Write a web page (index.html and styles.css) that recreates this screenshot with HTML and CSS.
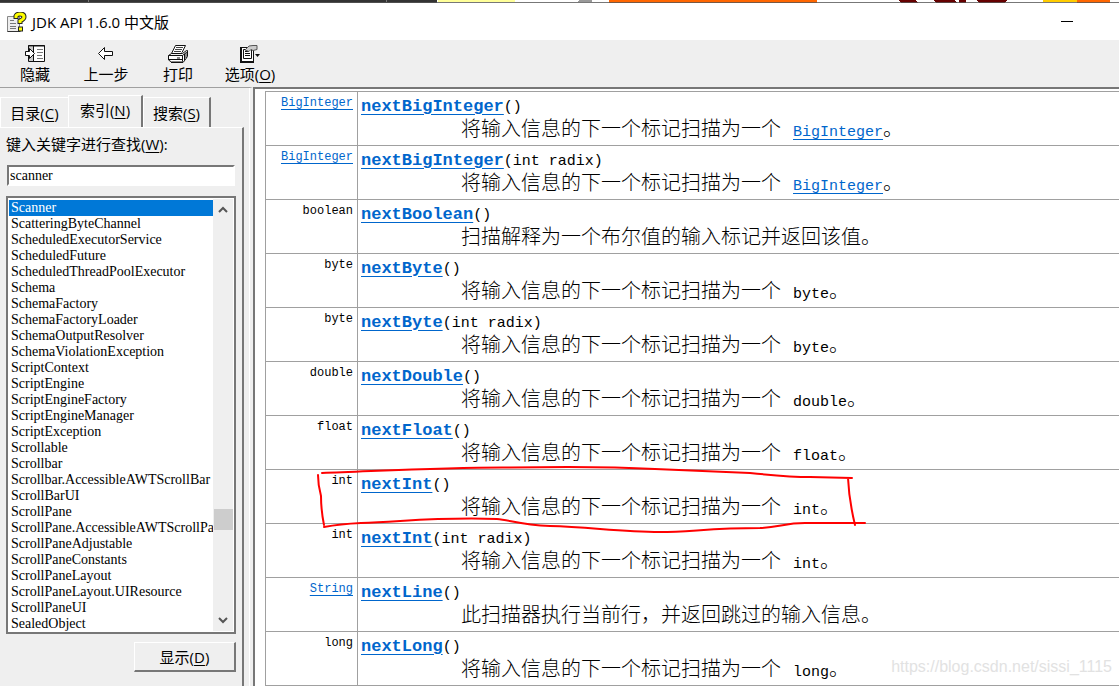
FILE: index.html
```html
<!DOCTYPE html>
<html lang="zh-CN">
<head>
<meta charset="utf-8">
<title>JDK API 1.6.0 中文版</title>
<link rel="stylesheet" href="styles.css">
</head>
<body>
<div class="backdrop"><svg width="1119" height="3" viewBox="0 0 1119 3" shape-rendering="crispEdges" aria-hidden="true"><path fill="#333" d="M0 0h437v3H0z"/><path fill="#777" d="M88 0h1v2h-1zM386 0h1v2h-1z"/><path fill="#ffff99" d="M438 0h77v2h-77z"/><path fill="#999" d="M579 0h13v2h-15z"/><path fill="#f60" d="M609 0h208v3H609zM1077 0h33v3h-33z"/><path fill="#600" d="M899 0h16l3 3h-17zM934 0h20l3 3h-21zM959 0h7v3h-7zM977 0h30l-2 3h-26z"/><path fill="#fc0" d="M1043 0h34v2h-34z"/><path fill="#555" fill-opacity=".8" d="M0 2h1119v1H0z"/></svg></div>
<header class="titlebar">
<svg class="app-icon" width="20" height="20" viewBox="0 0 20 20" aria-hidden="true"><path fill="#eee" stroke="#888" d="M.5 4.500h12v15H.5z"/><path fill="none" stroke="#333" d="M.5 19.500h13"/><path stroke="#777" d="M3 8.500h4M3 11.500h6M3 14.500h6M3 16.500h6"/><path fill="none" stroke="#222" stroke-width="5" d="M9 7V4q1-2 4-2 4 0 4 3 0 2-4 4v3M11 17h5"/><path fill="none" stroke="#ff0" stroke-width="3" d="M9 6V4q1-2 4-2 4 0 4 3 0 2-4 4v2M12 17h3"/></svg>
<h1 class="title">JDK API 1.6.0 中文版</h1>
<button class="minimize" type="button" aria-label="最小化"></button>
</header>
<nav class="toolbar">
<button type="button" class="tool"><svg width="20" height="20" viewBox="0 0 20 20" aria-hidden="true"><path fill="#fff" stroke="#111" d="M3.500 1.500h16v16h-16z"/><path fill="#ccc" d="M4 3h4v14H4z"/><path stroke="#111" d="M3 2h17M8.500 2v16"/><path stroke="#777" d="M12 5.500h6M12 8.500h6M12 11.500h5M12 14.500h6"/><path fill="#fff" stroke="#111" d="M.5 7.500h4v-3l5 5-5 5v-3h-4z"/></svg><span>隐藏</span></button>
<button type="button" class="tool"><svg width="20" height="20" viewBox="0 0 20 20" aria-hidden="true"><path fill="#fff" stroke="#111" d="M2.500 9.500l6-6v4h8v4h-8v4z"/></svg><span>上一步</span></button>
<button type="button" class="tool"><svg width="20" height="20" viewBox="0 0 20 20" aria-hidden="true"><path fill="#fff" stroke="#111" d="M7.500 1.500h10l-4 8h-10z"/><path stroke="#444" d="M8 3.500h7M7 5.500h7M6 7.500h7"/><path fill="#fff" stroke="#111" d="M.5 11.500l3-2h11l4-3h1v6l-4 5.500h-12l-3-2zM.5 11.500h14l5-4M14.500 11.500v6M16.500 10v6M18 9v5"/><path stroke="#111" d="M1 15.500h13M3 18.500h12"/><path stroke="#888" stroke-width="2" d="M9 14h3"/></svg><span>打印</span></button>
<button type="button" class="tool"><svg width="20" height="20" viewBox="0 0 20 20" aria-hidden="true"><path fill="#fff" stroke="#111" d="M.5 3.500h13v14H.5z"/><path fill="none" stroke="#111" stroke-width="2" d="M1 3v15h13"/><path fill="none" stroke="#111" d="M3.500 5.500h8v9h-8zM5 7.500h4M5 9.500h5M5 11.500h5"/><path fill="#ccc" stroke="#555" d="M5 6l4-4 4-.5h4v4l-4 1-2-1-2 2z"/><path fill="#111" d="M15 10h5l-2.500 3z"/></svg><span>选项(<u>O</u>)</span></button>
</nav>
<main class="workspace">
<aside class="sidebar">
<div class="tabs" role="tablist"><button type="button" role="tab" class="tab">目录(<u>C</u>)</button><button type="button" role="tab" class="tab active" aria-selected="true">索引(<u>N</u>)</button><button type="button" role="tab" class="tab">搜索(<u>S</u>)</button></div>
<section class="panel">
<label for="keyword">键入关键字进行查找(<u>W</u>):</label>
<input id="keyword" class="keyword" type="text" value="scanner">
<div class="listbox">
<ul class="entries"><li class="selected">Scanner</li><li>ScatteringByteChannel</li><li>ScheduledExecutorService</li><li>ScheduledFuture</li><li>ScheduledThreadPoolExecutor</li><li>Schema</li><li>SchemaFactory</li><li>SchemaFactoryLoader</li><li>SchemaOutputResolver</li><li>SchemaViolationException</li><li>ScriptContext</li><li>ScriptEngine</li><li>ScriptEngineFactory</li><li>ScriptEngineManager</li><li>ScriptException</li><li>Scrollable</li><li>Scrollbar</li><li>Scrollbar.AccessibleAWTScrollBar</li><li>ScrollBarUI</li><li>ScrollPane</li><li>ScrollPane.AccessibleAWTScrollPane</li><li>ScrollPaneAdjustable</li><li>ScrollPaneConstants</li><li>ScrollPaneLayout</li><li>ScrollPaneLayout.UIResource</li><li>ScrollPaneUI</li><li>SealedObject</li></ul>
<div class="scrollbar"><svg width="12" height="8" viewBox="0 0 12 8" aria-hidden="true"><path fill="none" stroke="#555" stroke-width="2" d="M2 7l4-4 4 4"/></svg><div class="thumb"></div><svg width="12" height="8" viewBox="0 0 12 8" aria-hidden="true"><path fill="none" stroke="#555" stroke-width="2" d="M2 1l4 4 4-4"/></svg></div>
</div>
<button type="button" class="show">显示(<u>D</u>)</button>
</section>
</aside>
<article class="document">
<table class="methods">
<tr><td class="type"><a href="#">BigInteger</a></td><td><a class="name" href="#">nextBigInteger</a>()<p>将输入信息的下一个标记扫描为一个 <a href="#">BigInteger</a>。</p></td></tr>
<tr><td class="type"><a href="#">BigInteger</a></td><td><a class="name" href="#">nextBigInteger</a>(int radix)<p>将输入信息的下一个标记扫描为一个 <a href="#">BigInteger</a>。</p></td></tr>
<tr><td class="type">boolean</td><td><a class="name" href="#">nextBoolean</a>()<p>扫描解释为一个布尔值的输入标记并返回该值。</p></td></tr>
<tr><td class="type">byte</td><td><a class="name" href="#">nextByte</a>()<p>将输入信息的下一个标记扫描为一个 <code>byte</code>。</p></td></tr>
<tr><td class="type">byte</td><td><a class="name" href="#">nextByte</a>(int radix)<p>将输入信息的下一个标记扫描为一个 <code>byte</code>。</p></td></tr>
<tr><td class="type">double</td><td><a class="name" href="#">nextDouble</a>()<p>将输入信息的下一个标记扫描为一个 <code>double</code>。</p></td></tr>
<tr><td class="type">float</td><td><a class="name" href="#">nextFloat</a>()<p>将输入信息的下一个标记扫描为一个 <code>float</code>。</p></td></tr>
<tr><td class="type">int</td><td><a class="name" href="#">nextInt</a>()<p>将输入信息的下一个标记扫描为一个 <code>int</code>。</p></td></tr>
<tr><td class="type">int</td><td><a class="name" href="#">nextInt</a>(int radix)<p>将输入信息的下一个标记扫描为一个 <code>int</code>。</p></td></tr>
<tr><td class="type"><a href="#">String</a></td><td><a class="name" href="#">nextLine</a>()<p>此扫描器执行当前行，并返回跳过的输入信息。</p></td></tr>
<tr><td class="type">long</td><td><a class="name" href="#">nextLong</a>()<p>将输入信息的下一个标记扫描为一个 <code>long</code>。</p></td></tr>
</table>
<svg class="annotation" width="560" height="80" viewBox="310 460 560 80" aria-hidden="true"><path fill="none" stroke="#f00" stroke-width="2" stroke-linecap="round" stroke-linejoin="round" d="M322 473C380 471 450 467 510 467.500C590 466 620 467 655 469L750 473Q790 477 810 477L852 478M848 478Q849 500 855 525M865 523H805C785 523 780 527 760 528C710 528 690 532 660 532C620 532 590 527 550 526C520 525 510 520 497 519C440 517 410 521 361 523Q340 524 324 527M318 475Q318 485 321 496Q321 510 324 525"/></svg>
<span class="watermark">https://blog.csdn.net/sissi_1115</span>
</article>
</main>
</body>
</html>
```
FILE: styles.css
```css
* { box-sizing: border-box; }
body { margin: 0; height: 100vh; overflow: hidden; display: flex; flex-direction: column; background: #fff; color: #000; font: 15px/20px "Open Sans", "Noto Sans CJK SC", sans-serif; }
button { font: inherit; color: inherit; border: 0; padding: 0; background: transparent; }
u { text-underline-offset: 2px; }
svg { display: block; flex: none; }
a { color: #0066cc; text-underline-offset: 3px; }
.backdrop { flex: none; height: 3px; overflow: hidden; }
.titlebar { flex: none; height: 37px; display: flex; align-items: center; padding: 0 46px 0 7px; gap: 5px; }
.title { margin: 0; flex: 1; font-size: 15px; font-weight: 400; }
.minimize { width: 12px; height: 1px; background: #000; }
.toolbar { flex: none; height: 47px; display: flex; background: #efefef; padding: 4px 0 0; }
.tool { width: 72px; display: flex; flex-direction: column; align-items: center; white-space: nowrap; }
.tool:first-child { width: 70px; }
.workspace { flex: 1; min-height: 0; display: flex; }
.sidebar { flex: none; width: 253px; display: flex; flex-direction: column; border-top: 1px solid #a0a0a0; border-right: 3px solid #efefef; background: #efefef; padding-top: 8px; box-shadow: inset -1px 0 #fff; }
.tabs { flex: none; height: 31px; display: flex; align-items: flex-end; }
.tab { width: 68px; height: 30px; border: solid #fff; border-width: 1px 0 0 1px; }
.tab:last-child { border-right: 2px solid #777; }
.tab.active { width: 75px; height: 33px; margin-bottom: -1px; padding-bottom: 4px; border-right: 2px solid #777; background: #efefef; }
.panel { width: 244px; flex: 1; min-height: 0; border-top: 1px solid #fff; border-right: 2px solid #777; padding: 6px 6px 0; display: flex; flex-direction: column; }
.keyword { flex: none; width: 228px; height: 21px; margin-top: 11px; margin-left: 1px; border: 2px solid; border-color: #777 #fff #fff #777; padding: 1px 1px 0; font: 14px/16px "Liberation Serif", serif; border-radius: 0; outline: 0; }
.listbox { flex: none; height: 438px; margin-top: 10px; width: 230px; border: 2px solid #777; background: #fff; display: flex; padding: 1px; }
.entries { list-style: none; margin: 0; padding: 1px 0 0; flex: 1; min-width: 0; overflow: hidden; font: 14px/16px "Liberation Serif", serif; }
.entries li { padding-left: 2px; white-space: nowrap; }
.entries .selected { color: #fff; background: #0078d7; }
.scrollbar { width: 20px; background: #efefef; display: flex; flex-direction: column; align-items: center; padding: 6px 0; }
.thumb { width: 19px; height: 21px; background: #cdcdcd; margin: 296px 0 auto; }
.show { flex: none; align-self: flex-end; width: 102px; height: 30px; margin-top: 8px; border: solid; border-width: 1px 2px 2px 1px; border-color: #fff #777 #777 #fff; }
.document { position: relative; flex: 1; min-width: 0; overflow: hidden; border: solid #777; border-width: 2px 0 0 2px; padding: 2px 0 0 10px; }
.methods { width: 100%; border-collapse: collapse; font: 15px/22px "Liberation Mono", "Noto Sans CJK SC", monospace; }
.methods td { border: 1px solid #a0a0a0; vertical-align: top; height: 54px; padding: 4px 3px 0; }
.methods tr > td:last-child { border-right: 0; }
.methods .type { width: 92px; text-align: right; font-size: 12px; line-height: 16px; padding: 3px 4px 0; }
.methods p { margin: 0 0 0 100px; height: 24px; font-size: 20px; font-weight: 300; line-height: 24px; white-space: nowrap; }
.methods p a, .methods code { font: 15px/22px "Liberation Mono", monospace; }
.name { font-size: 17px; font-weight: 700; }
.annotation { position: absolute; left: 55px; top: 371px; }
.watermark { position: absolute; right: 7px; bottom: 9px; color: #e2e2e2; font: 16px/20px "Liberation Sans", sans-serif; }
```
